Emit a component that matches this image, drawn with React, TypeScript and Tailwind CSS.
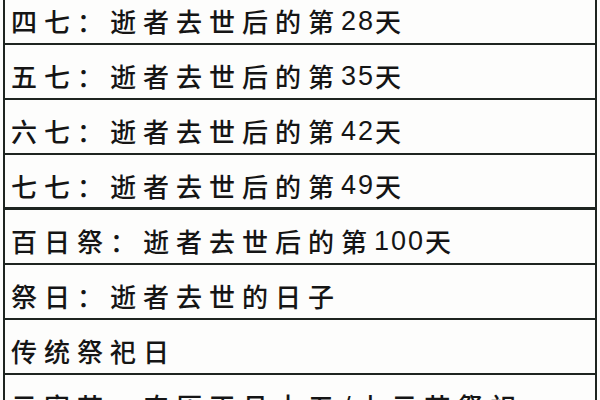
const rows: { label: string; rest: (string | number)[]; thick?: boolean }[] = [
  { label: "四七：", rest: ["逝者去世后的第", 28, "天"] },
  { label: "五七：", rest: ["逝者去世后的第", 35, "天"] },
  { label: "六七：", rest: ["逝者去世后的第", 42, "天"] },
  { label: "七七：", rest: ["逝者去世后的第", 49, "天"], thick: true },
  { label: "百日祭：", rest: ["逝者去世后的第", 100, "天"] },
  { label: "祭日：", rest: ["逝者去世的日子"] },
  { label: "传统祭祀日", rest: [] },
  { label: "元宵节：", rest: ["农历正月十五/上元节祭祀"] },
]

export default function App() {
  return (
    <div className="w-[600px] h-[400px] overflow-hidden bg-[#fdfdfc]">
      <div
        className="-mt-[12px] mx-[3px] border-x-2 border-t-2 border-[#1e2420] text-[#151515]"
        style={{ fontFamily: '"Noto Sans CJK SC", "Liberation Sans", sans-serif' }}
      >
        {rows.map((r, i) => (
          <div
            key={i}
            className={`h-[55px] flex items-center pt-[9px] pl-[6px] text-[26px] font-medium leading-none tracking-[7px] border-[#1e2420] ${
              r.thick ? "border-b-[3px]" : "border-b-2"
            }`}
          >
            <span>{r.label}</span>
            {r.rest.map((p, j) =>
              typeof p === "number" ? (
                <span
                  key={j}
                  className="tracking-[2px] text-[27px] font-normal"
                  style={{ fontFamily: '"Liberation Sans", sans-serif' }}
                >
                  {p}
                </span>
              ) : (
                <span key={j}>{p}</span>
              )
            )}
          </div>
        ))}
      </div>
    </div>
  )
}
